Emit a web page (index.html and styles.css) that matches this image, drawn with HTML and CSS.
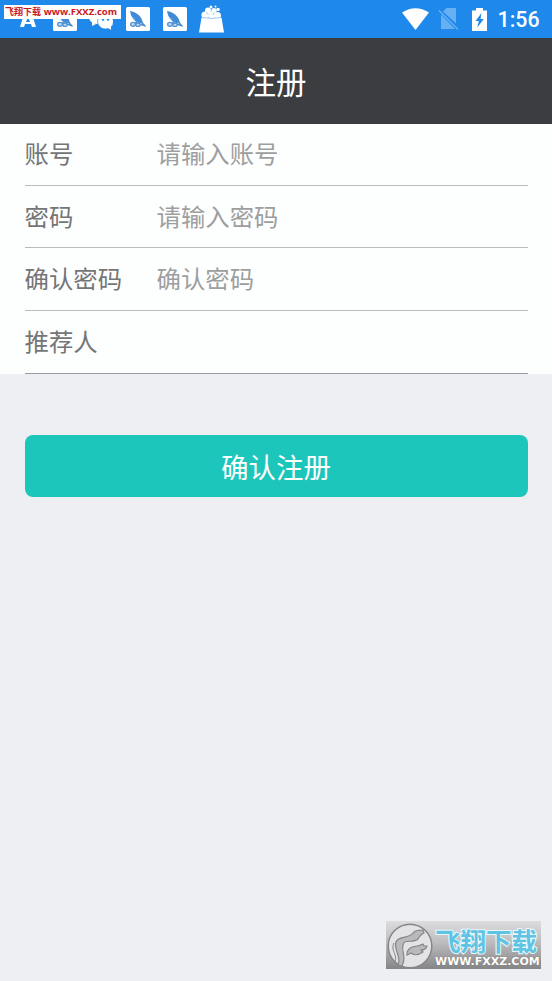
FILE: index.html
```html
<!DOCTYPE html>
<html lang="zh-CN">
<head>
<meta charset="utf-8">
<title>注册</title>
<link rel="stylesheet" href="styles.css">
</head>
<body>
<svg width="0" height="0" class="defs" aria-hidden="true">
  <symbol id="feather" viewBox="0 0 24 24">
    <rect width="24" height="24" rx="1.5" fill="#fff"/>
    <path d="M4 4C10 5 16 9 17 16.500L11 15.500Q5 11.500 4 4Z" fill="#3f8bd8"/>
    <path d="M5 9.500L9 12.500" stroke="#cfe2f5" stroke-width=".5"/>
    <path d="M14.500 14L19.500 19.500M9 15.500L18 18.500" stroke="#4d90d4" stroke-width="1.400"/>
    <ellipse cx="7" cy="17.300" rx="2.400" ry="2" fill="#b9d7f3" stroke="#4d90d4" stroke-width="1.200"/>
    <ellipse cx="12" cy="17.800" rx="2.200" ry="1.700" fill="#b9d7f3" stroke="#4d90d4" stroke-width="1.200"/>
  </symbol>
</svg>
<div class="screen">
  <div class="statusbar">
    <div class="notices">
      <svg viewBox="0 0 24 24"><path d="M9 4h6l5 16h-4l-1-3h-6l-1 3H4Z" fill="#fff"/><path d="M12 10l2 5h-4z" fill="#1e88eb"/></svg>
      <svg viewBox="0 0 24 24"><use href="#feather"/></svg>
      <svg viewBox="0 0 24 24"><ellipse cx="8" cy="10" rx="8" ry="7" fill="#fff"/><path d="M3 15v4l4-2z" fill="#fff"/><ellipse cx="16.500" cy="14.500" rx="8" ry="7.500" fill="#fff" stroke="#1e88eb" stroke-width=".7"/><path d="M18 20l4-1v4z" fill="#fff"/><circle cx="14" cy="12.500" r="1.200" fill="#1e88eb"/><circle cx="19" cy="12.500" r="1.200" fill="#1e88eb"/></svg>
      <svg viewBox="0 0 24 24"><use href="#feather"/></svg>
      <svg viewBox="0 0 24 24"><use href="#feather"/></svg>
      <svg class="bag" viewBox="0 0 25 28"><g fill="#fff"><path d="M2.500 12.500h20l2.500 15H0Z"/><circle cx="6" cy="10" r="3.600"/><circle cx="12.500" cy="10" r="3.600"/><circle cx="18.500" cy="10.500" r="3.500"/><circle cx="9" cy="5.500" r="3"/><circle cx="15" cy="5.500" r="2.600"/><circle cx="19" cy="4.500" r="1.800"/><circle cx="12" cy="1.900" r="1.500"/><circle cx="16.500" cy="1.600" r="1"/></g><path d="M3 12.500q9 2 19 0M7 7.500l2.500 2M15 7.500l-1 2.500" stroke="#6fb3f3" stroke-width=".7" fill="none"/></svg>
    </div>
    <div class="system">
      <svg class="wifi" viewBox="0 0 27 22"><path d="M0 4.500Q13.500-4 27 4.500L13.500 22Z" fill="#fff"/></svg>
      <svg class="sim" viewBox="0 0 22 22"><path d="M8.500 0H18v15.500L5 3.500Z" fill="#66b0f3"/><path d="M3 6.500L17 21H3Z" fill="#66b0f3"/><path d="M1 2.500L20 21.500" stroke="#66b0f3" stroke-width="1.500"/></svg>
      <svg class="battery" viewBox="0 0 15 23"><path d="M4 0h7v2.500h4V23H0V2.500h4Z" fill="#fff"/><path d="M9.500 5L3.500 13h3.300l-1.500 6.500L11.800 11H8.500Z" fill="#1e88eb"/></svg>
      <span class="clock">1:56</span>
    </div>
  </div>
  <header class="titlebar">注册</header>
  <form class="form">
    <label class="row"><span class="label">账号</span><input type="text" placeholder="请输入账号"></label>
    <label class="row"><span class="label">密码</span><input type="password" placeholder="请输入密码"></label>
    <label class="row"><span class="label">确认密码</span><input type="password" placeholder="确认密码"></label>
    <label class="row"><span class="label">推荐人</span><input type="text"></label>
  </form>
  <button class="submit" type="button">确认注册</button>

  <div class="source-tag"><span class="tag-name">飞翔下载</span><span class="tag-url">www.FXXZ.com</span></div>
  <div class="site-logo">
    <svg class="emblem" viewBox="0 0 48 48">
      <circle cx="24" cy="25" r="21.800" fill="#e3e3e5" stroke="#858587" stroke-width="1.500"/>
      <path d="M12 44C16 36 7 28 10 21C13 14 22 19 28 11Q30 9 37 9L38 12Q35 13 32 18C27 23 18 17 17 24C15 31 21 36 16 45Z" fill="#b9b9bb" stroke="#858587" stroke-width="1.200"/>
      <path d="M8 22C4 29 12 34 9 41" fill="none" stroke="#858587" stroke-width="1"/>
      <path d="M21 31C25 23 31 27 37 23L38 25L41 25Q40 29 35 29L37 31Q30 36 25 32L21 34Z" fill="#b9b9bb" stroke="#858587" stroke-width="1.100"/>
    </svg>
    <div class="logo-lines">
      <span class="logo-name">飞翔下载</span>
      <span class="logo-url">WWW.FXXZ.COM</span>
    </div>
  </div>
</div>
</body>
</html>
```
FILE: styles.css
```css
* { box-sizing: border-box; }

body {
  margin: 0;
  background: #eeeff3;
  font-family: "Noto Sans CJK SC", sans-serif;
}

.defs { position: absolute; }

.screen {
  position: relative;
  display: flex;
  flex-direction: column;
  height: 981px;
  overflow: hidden;
}

.statusbar {
  display: flex;
  justify-content: space-between;
  align-items: center;
  height: 38px;
  padding: 0 12.500px 0 16px;
  background: #1e88eb;
}

.notices, .system { display: flex; align-items: center; }
.notices { gap: 12.7px; }
.notices svg { width: 24px; height: 24px; }
.notices .bag { width: 25px; height: 28px; }

.wifi { width: 27px; height: 22px; margin-right: 9px; }
.sim { width: 22px; height: 22px; margin-right: 12px; }
.battery { width: 15px; height: 23px; margin-right: 11px; }

.clock {
  color: #fff;
  font: 500 21.300px/38px Roboto, sans-serif;
  padding-top: 2px;
}

.titlebar {
  height: 86px;
  background: #3c3d41;
  color: #fff;
  font-size: 30.5px;
  line-height: 86px;
  text-align: center;
}

.form {
  height: 250px;
  padding: 0 24.500px;
  background: #fdfefe;
}

.row {
  display: flex;
  align-items: center;
  height: 63px;
  padding-bottom: 2px;
  border-bottom: 1px solid #b9bbbc;
  font-size: 24.400px;
  line-height: 36px;
  color: #747576;
}

.row:nth-child(-n+2) { height: 62px; }
.row:first-child { padding-bottom: 4px; }
.row:nth-child(2) { padding-bottom: 1px; }
.row:last-child { border-color: #999b9c; }

.label { width: 132px; }

.row input {
  flex: 1;
  min-width: 0;
  height: 36px;
  padding: 0;
  border: 0;
  outline: 0;
  background: transparent;
  font: inherit;
}

.row input::placeholder { color: #9d9e9f; opacity: 1; }

.submit {
  height: 62px;
  margin: 61px 24.500px 0;
  padding: 0 0 1px;
  border: 0;
  border-radius: 8px;
  background: #1dc6bb;
  color: #fff;
  font: 27.500px/60px "Noto Sans CJK SC", sans-serif;
}

.source-tag {
  position: absolute;
  left: 4px;
  top: 5px;
  width: 117px;
  height: 14px;
  display: flex;
  align-items: center;
  justify-content: space-between;
  padding: 0 4px 0 1px;
  background: #fff;
  color: #c9171e;
  line-height: 14px;
  white-space: nowrap;
}

.tag-name { font-size: 9px; font-weight: 700; }
.tag-url { font: 700 9.500px/14px "Open Sans", sans-serif; }

.site-logo {
  position: absolute;
  left: 386px;
  top: 921px;
  width: 155px;
  height: 48px;
  display: flex;
  background: linear-gradient(#dddde0, #bcbcbe 45%, #858587);
}

.emblem { width: 48px; height: 48px; }

.logo-lines {
  display: flex;
  flex-direction: column;
  padding: 4px 0 0 1px;
  white-space: nowrap;
}

.logo-name {
  height: 30px;
  color: #5fc3e3;
  font-size: 25.500px;
  font-weight: 700;
  line-height: 30px;
  -webkit-text-stroke: 2px #e9f8fc;
  paint-order: stroke fill;
}

.logo-url {
  height: 13px;
  color: #fff;
  font: 700 11px/13px "DejaVu Sans", sans-serif;
  text-shadow: 0 0 1px #666;
}
```
